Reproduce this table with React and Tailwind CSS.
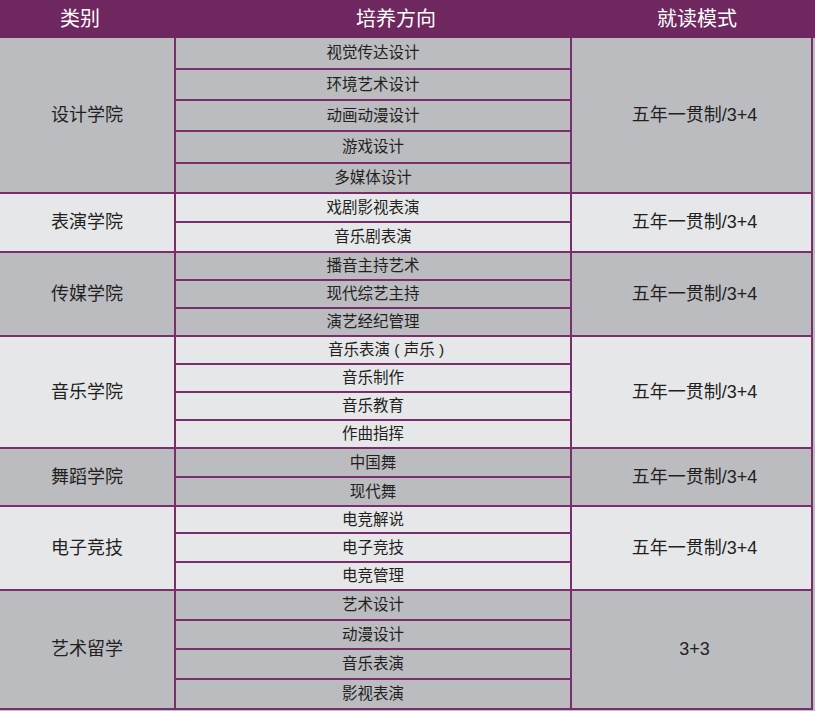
const groups = [
  {
    name: '设计学院',
    mode: '五年一贯制/3+4',
    bg: 'bg-[#bbbcc0]',
    items: [
      ['视觉传达设计', 'h-[30px]'],
      ['环境艺术设计', 'h-[31px]'],
      ['动画动漫设计', 'h-[31px]'],
      ['游戏设计', 'h-[32px]'],
      ['多媒体设计', 'h-[30px]'],
    ],
  },
  {
    name: '表演学院',
    mode: '五年一贯制/3+4',
    bg: 'bg-[#e6e7e9]',
    items: [
      ['戏剧影视表演', 'h-[27px]'],
      ['音乐剧表演', 'h-[30px]'],
    ],
  },
  {
    name: '传媒学院',
    mode: '五年一贯制/3+4',
    bg: 'bg-[#bbbcc0]',
    items: [
      ['播音主持艺术', 'h-[26px]'],
      ['现代综艺主持', 'h-[28px]'],
      ['演艺经纪管理', 'h-[28px]'],
    ],
  },
  {
    name: '音乐学院',
    mode: '五年一贯制/3+4',
    bg: 'bg-[#e6e7e9]',
    items: [
      ['音乐表演 ( 声乐 )', 'h-[26px] pl-[26px]'],
      ['音乐制作', 'h-[28px]'],
      ['音乐教育', 'h-[28px]'],
      ['作曲指挥', 'h-[28px]'],
    ],
  },
  {
    name: '舞蹈学院',
    mode: '五年一贯制/3+4',
    bg: 'bg-[#bbbcc0]',
    items: [
      ['中国舞', 'h-[27px]'],
      ['现代舞', 'h-[29px]'],
    ],
  },
  {
    name: '电子竞技',
    mode: '五年一贯制/3+4',
    bg: 'bg-[#e6e7e9]',
    items: [
      ['电竞解说', 'h-[25px]'],
      ['电子竞技', 'h-[29px]'],
      ['电竞管理', 'h-[28px]'],
    ],
  },
  {
    name: '艺术留学',
    mode: '3+3',
    bg: 'bg-[#bbbcc0]',
    items: [
      ['艺术设计', 'h-[28px]'],
      ['动漫设计', 'h-[29px]'],
      ['音乐表演', 'h-[30px]'],
      ['影视表演', 'h-[30px]'],
    ],
  },
];

const font = "font-['Liberation_Sans','Noto_Sans_CJK_SC',sans-serif]";

export default function App() {
  return (
    <div className={`w-[815px] h-[711px] bg-[#bdbec2] text-[#231f20] ${font}`}>
      {/* header */}
      <div className="flex h-[38px] items-center bg-[#6f2760] text-[20px] text-white">
        <div className="w-[160px] text-center">类别</div>
        <div className="w-[472px] text-center">培养方向</div>
        <div className="w-[130px] text-center">就读模式</div>
      </div>

      <div className="w-[813px] border-r-2 border-b-2 border-[#7a2f6c]">
        {groups.map((g, gi) => (
          <div
            key={g.name}
            className={`flex ${g.bg} ${gi > 0 ? 'border-t-2 border-[#7a2f6c]' : ''}`}
          >
            <div className="flex w-[174px] items-center justify-center text-[18px]">
              {g.name}
            </div>
            <div className="w-[398px] border-x-2 border-[#7a2f6c]">
              {g.items.map(([label, h], i) => (
                <div
                  key={label}
                  className={`flex ${h} items-center justify-center whitespace-pre text-[15.5px] ${
                    i > 0 ? 'border-t-2 border-[#7a2f6c]' : ''
                  }`}
                >
                  {label}
                </div>
              ))}
            </div>
            <div className="flex flex-1 items-center justify-center pl-[6px] text-[18px]">
              {g.mode}
            </div>
          </div>
        ))}
      </div>
    </div>
  );
}
